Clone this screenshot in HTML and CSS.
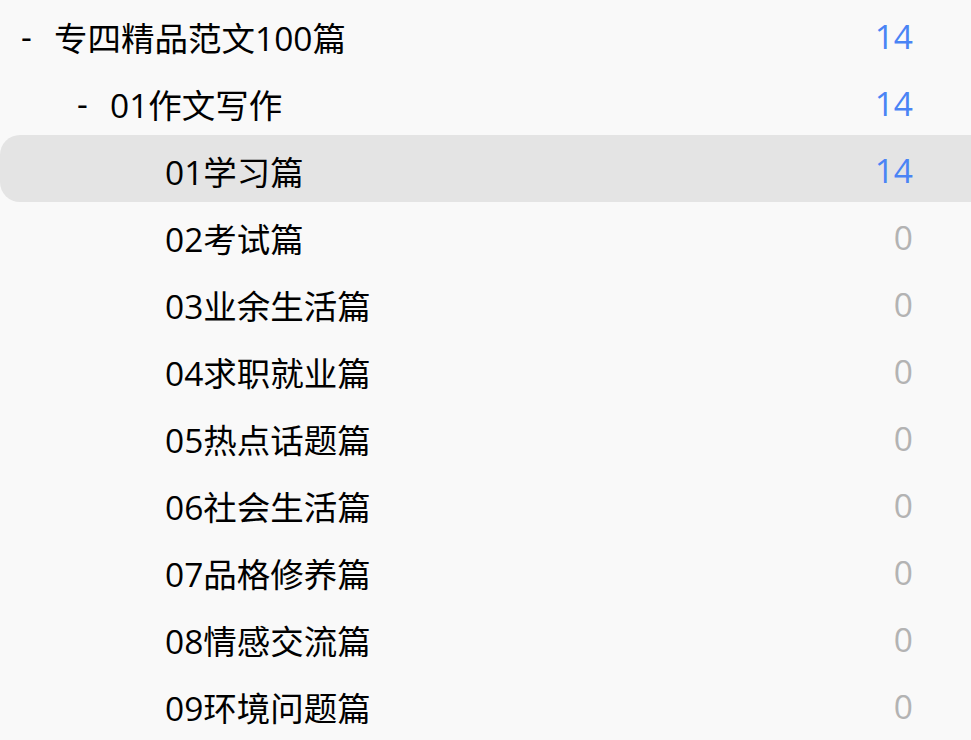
FILE: index.html
```html
<!DOCTYPE html>
<html lang="zh">
<head>
    <meta charset="UTF-8">
    <title>专四精品范文100篇</title>
    <link rel="stylesheet" href="styles.css">
</head>
<body>
    <ul class="tree">
        <li class="node level-1">
            <span class="toggle">-</span>
            <span class="label">专四精品范文100篇</span>
            <span class="count has">14</span>
        </li>
        <li class="node level-2">
            <span class="toggle">-</span>
            <span class="label">01作文写作</span>
            <span class="count has">14</span>
        </li>
        <li class="node level-3 active">
            <span class="label">01学习篇</span>
            <span class="count has">14</span>
        </li>
        <li class="node level-3">
            <span class="label">02考试篇</span>
            <span class="count">0</span>
        </li>
        <li class="node level-3">
            <span class="label">03业余生活篇</span>
            <span class="count">0</span>
        </li>
        <li class="node level-3">
            <span class="label">04求职就业篇</span>
            <span class="count">0</span>
        </li>
        <li class="node level-3">
            <span class="label">05热点话题篇</span>
            <span class="count">0</span>
        </li>
        <li class="node level-3">
            <span class="label">06社会生活篇</span>
            <span class="count">0</span>
        </li>
        <li class="node level-3">
            <span class="label">07品格修养篇</span>
            <span class="count">0</span>
        </li>
        <li class="node level-3">
            <span class="label">08情感交流篇</span>
            <span class="count">0</span>
        </li>
        <li class="node level-3">
            <span class="label">09环境问题篇</span>
            <span class="count">0</span>
        </li>
    </ul>
</body>
</html>
```

FILE: styles.css
```css
body {
    margin: 0;
    background-color: #f9f9f9;
    font-family: "Open Sans", "Noto Sans CJK SC", sans-serif;
    color: #000;
    overflow: hidden;
}
.tree {
    list-style: none;
    margin: 0;
    padding: 1px 0 0 0;
}
.node {
    display: flex;
    align-items: center;
    box-sizing: border-box;
    height: 67px;
    padding-top: 3px;
    padding-right: 58px;
    font-size: 33.5px;
    border-radius: 20px 0 0 20px;
}
.node.active {
    background-color: #e4e4e4;
}
.level-1 {
    padding-left: 21px;
}
.level-2 {
    padding-left: 77px;
}
.level-3 {
    padding-left: 165px;
}
.toggle {
    width: 33px;
}
.label {
    flex: 1;
}
.count {
    color: #b3b3b3;
}
.count.has {
    color: #4a84f5;
}
```
